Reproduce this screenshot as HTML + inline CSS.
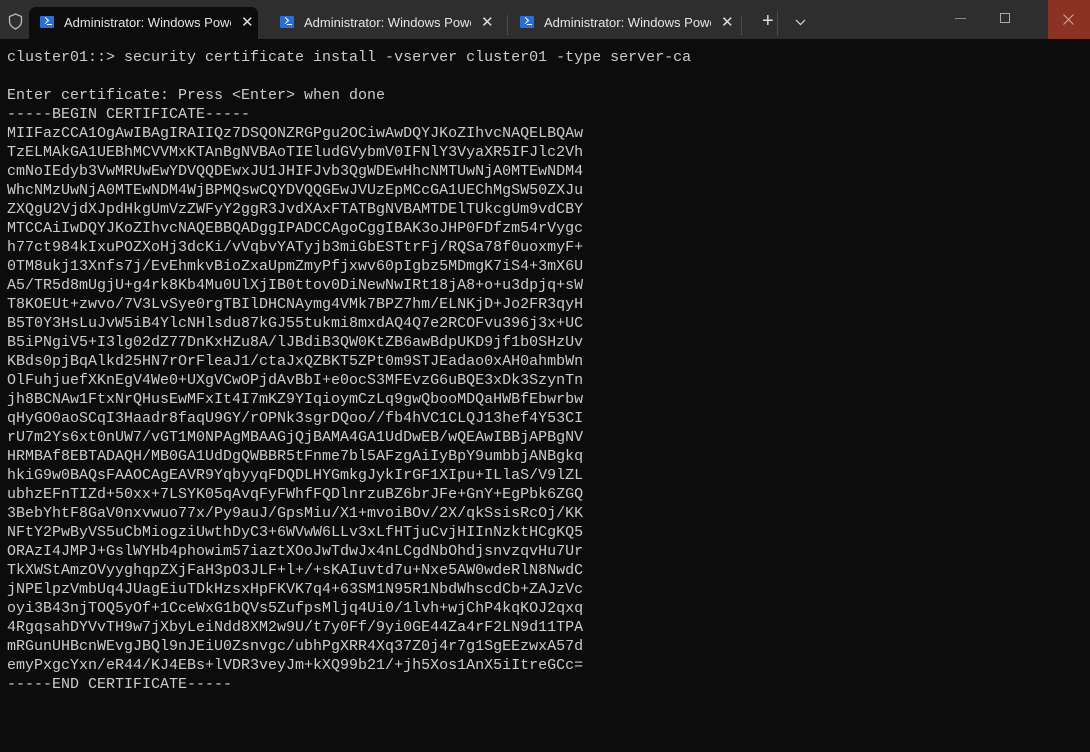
<!DOCTYPE html>
<html><head><style>
html,body{margin:0;padding:0;width:1090px;height:752px;background:#0c0c0c;overflow:hidden}
.bar{position:absolute;left:0;top:0;width:1090px;height:39px;background:#2e2e2e}
.tab{position:absolute;top:7px;height:32px;font:13px "Liberation Sans",sans-serif;color:#e6e6e6;line-height:32px}
.tab.active{background:#0c0c0c;border-radius:7px 7px 0 0}
.tab .t{position:absolute;left:35px;top:0;white-space:nowrap;width:167px;overflow:hidden}
.tab .x{position:absolute;left:212px;top:0;font-size:15px;color:#ddd}
.ico{position:absolute;left:11px;top:9px;width:14px;height:12px;background:#2a6fd6;border-radius:1px}
.ico:after{content:"";position:absolute;left:3px;top:2px;width:4px;height:4px;border-right:1.5px solid #fff;border-bottom:1.5px solid #fff;transform:rotate(-45deg)}
.ico:before{content:"";position:absolute;left:7px;top:8px;width:5px;height:1.3px;background:#fff}
pre{position:absolute;left:7px;top:48px;margin:0;font:15px/19px "Liberation Mono",monospace;color:#cccccc}
.sep{position:absolute;top:15px;width:1px;height:20px;background:#4a4a4a}
</style></head><body>
<div class="bar">
<svg style="position:absolute;left:8px;top:13px" width="15" height="17" viewBox="0 0 15 17"><path d="M7.5 1 L13.5 3.5 V8.5 C13.5 12 10.5 14.5 7.5 16 C4.5 14.5 1.5 12 1.5 8.5 V3.5 Z" fill="none" stroke="#bbb" stroke-width="1.3"/></svg>
<div class="tab active" style="left:29px;width:229px"><div class="ico"></div><div class="t">Administrator: Windows Powe</div><div class="x">✕</div></div>
<div class="tab" style="left:269px;width:229px"><div class="ico"></div><div class="t">Administrator: Windows Power</div><div class="x">✕</div></div>
<div class="sep" style="left:507px"></div>
<div class="tab" style="left:509px;width:229px"><div class="ico"></div><div class="t">Administrator: Windows Power</div><div class="x">✕</div></div>
<div class="sep" style="left:741px"></div>
<div style="position:absolute;left:762px;top:10px;font:20px 'Liberation Sans',sans-serif;color:#ddd">+</div>
<div class="sep" style="left:777px;top:11px;height:25px"></div>
<svg style="position:absolute;left:795px;top:19px" width="11" height="7"><path d="M1 1 L5.5 5.5 L10 1" fill="none" stroke="#ddd" stroke-width="1.2"/></svg>
<div style="position:absolute;left:955px;top:18px;width:11px;height:1px;background:#888"></div>
<div style="position:absolute;left:1000px;top:13px;width:8px;height:8px;border:1px solid #aaa"></div>
<div style="position:absolute;left:1048px;top:0;width:42px;height:39px;background:#8a3325"></div>
<svg style="position:absolute;left:1063px;top:14px" width="11" height="11"><path d="M0.5 0.5 L10.5 10.5 M10.5 0.5 L0.5 10.5" stroke="#d9a89f" stroke-width="1"/></svg>
</div>
<pre>cluster01::&gt; security certificate install -vserver cluster01 -type server-ca

Enter certificate: Press &lt;Enter&gt; when done
-----BEGIN CERTIFICATE-----
MIIFazCCA1OgAwIBAgIRAIIQz7DSQONZRGPgu2OCiwAwDQYJKoZIhvcNAQELBQAw
TzELMAkGA1UEBhMCVVMxKTAnBgNVBAoTIEludGVybmV0IFNlY3VyaXR5IFJlc2Vh
cmNoIEdyb3VwMRUwEwYDVQQDEwxJU1JHIFJvb3QgWDEwHhcNMTUwNjA0MTEwNDM4
WhcNMzUwNjA0MTEwNDM4WjBPMQswCQYDVQQGEwJVUzEpMCcGA1UEChMgSW50ZXJu
ZXQgU2VjdXJpdHkgUmVzZWFyY2ggR3JvdXAxFTATBgNVBAMTDElTUkcgUm9vdCBY
MTCCAiIwDQYJKoZIhvcNAQEBBQADggIPADCCAgoCggIBAK3oJHP0FDfzm54rVygc
h77ct984kIxuPOZXoHj3dcKi/vVqbvYATyjb3miGbESTtrFj/RQSa78f0uoxmyF+
0TM8ukj13Xnfs7j/EvEhmkvBioZxaUpmZmyPfjxwv60pIgbz5MDmgK7iS4+3mX6U
A5/TR5d8mUgjU+g4rk8Kb4Mu0UlXjIB0ttov0DiNewNwIRt18jA8+o+u3dpjq+sW
T8KOEUt+zwvo/7V3LvSye0rgTBIlDHCNAymg4VMk7BPZ7hm/ELNKjD+Jo2FR3qyH
B5T0Y3HsLuJvW5iB4YlcNHlsdu87kGJ55tukmi8mxdAQ4Q7e2RCOFvu396j3x+UC
B5iPNgiV5+I3lg02dZ77DnKxHZu8A/lJBdiB3QW0KtZB6awBdpUKD9jf1b0SHzUv
KBds0pjBqAlkd25HN7rOrFleaJ1/ctaJxQZBKT5ZPt0m9STJEadao0xAH0ahmbWn
OlFuhjuefXKnEgV4We0+UXgVCwOPjdAvBbI+e0ocS3MFEvzG6uBQE3xDk3SzynTn
jh8BCNAw1FtxNrQHusEwMFxIt4I7mKZ9YIqioymCzLq9gwQbooMDQaHWBfEbwrbw
qHyGO0aoSCqI3Haadr8faqU9GY/rOPNk3sgrDQoo//fb4hVC1CLQJ13hef4Y53CI
rU7m2Ys6xt0nUW7/vGT1M0NPAgMBAAGjQjBAMA4GA1UdDwEB/wQEAwIBBjAPBgNV
HRMBAf8EBTADAQH/MB0GA1UdDgQWBBR5tFnme7bl5AFzgAiIyBpY9umbbjANBgkq
hkiG9w0BAQsFAAOCAgEAVR9YqbyyqFDQDLHYGmkgJykIrGF1XIpu+ILlaS/V9lZL
ubhzEFnTIZd+50xx+7LSYK05qAvqFyFWhfFQDlnrzuBZ6brJFe+GnY+EgPbk6ZGQ
3BebYhtF8GaV0nxvwuo77x/Py9auJ/GpsMiu/X1+mvoiBOv/2X/qkSsisRcOj/KK
NFtY2PwByVS5uCbMiogziUwthDyC3+6WVwW6LLv3xLfHTjuCvjHIInNzktHCgKQ5
ORAzI4JMPJ+GslWYHb4phowim57iaztXOoJwTdwJx4nLCgdNbOhdjsnvzqvHu7Ur
TkXWStAmzOVyyghqpZXjFaH3pO3JLF+l+/+sKAIuvtd7u+Nxe5AW0wdeRlN8NwdC
jNPElpzVmbUq4JUagEiuTDkHzsxHpFKVK7q4+63SM1N95R1NbdWhscdCb+ZAJzVc
oyi3B43njTOQ5yOf+1CceWxG1bQVs5ZufpsMljq4Ui0/1lvh+wjChP4kqKOJ2qxq
4RgqsahDYVvTH9w7jXbyLeiNdd8XM2w9U/t7y0Ff/9yi0GE44Za4rF2LN9d11TPA
mRGunUHBcnWEvgJBQl9nJEiU0Zsnvgc/ubhPgXRR4Xq37Z0j4r7g1SgEEzwxA57d
emyPxgcYxn/eR44/KJ4EBs+lVDR3veyJm+kXQ99b21/+jh5Xos1AnX5iItreGCc=
-----END CERTIFICATE-----</pre>
</body></html>
